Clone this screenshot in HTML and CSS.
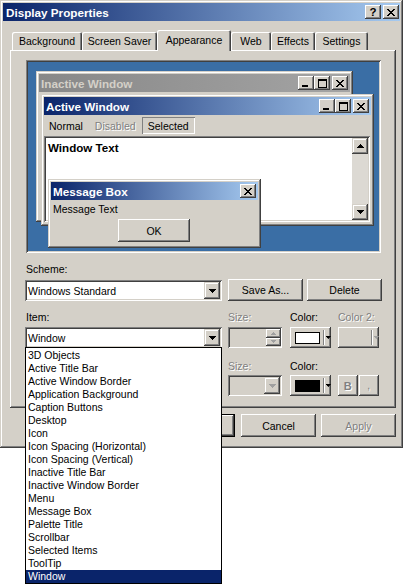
FILE: index.html
```html
<!DOCTYPE html>
<html>
<head>
<meta charset="utf-8">
<link rel="stylesheet" href="styles.css">
</head>
<body>
<div class="dialog">
  <div class="titlebar">
    <span class="title">Display Properties</span>
    <div class="caps">
      <div class="cap help">?</div>
      <div class="cap"><svg width="8" height="7" viewBox="0 0 8 7"><path d="M0 0h2v1h-2z M6 0h2v1h-2z M1 1h2v1h-2z M5 1h2v1h-2z M2 2h4v1h-4z M3 3h2v1h-2z M2 4h4v1h-4z M1 5h2v1h-2z M5 5h2v1h-2z M0 6h2v1h-2z M6 6h2v1h-2z"/></svg></div>
    </div>
  </div>

  <div class="tabs">
    <div class="tab w-bg">Background</div>
    <div class="tab w-ss">Screen Saver</div>
    <div class="tab sel w-ap">Appearance</div>
    <div class="tab w-web">Web</div>
    <div class="tab w-ef">Effects</div>
    <div class="tab w-set">Settings</div>
  </div>

  <div class="panel">
    <div class="preview">
      <div class="win inactive">
        <div class="wtitle">
          <span class="wname">Inactive Window</span>
          <div class="caps">
            <div class="cap min"><span class="minbar"></span></div>
            <div class="cap"><svg width="9" height="9" viewBox="0 0 9 9"><path fill-rule="evenodd" d="M0 0h9v9h-9z M1 2v6h7v-6z"/></svg></div>
            <div class="cap closecap"><svg width="8" height="7" viewBox="0 0 8 7"><path d="M0 0h2v1h-2z M6 0h2v1h-2z M1 1h2v1h-2z M5 1h2v1h-2z M2 2h4v1h-4z M3 3h2v1h-2z M2 4h4v1h-4z M1 5h2v1h-2z M5 5h2v1h-2z M0 6h2v1h-2z M6 6h2v1h-2z"/></svg></div>
          </div>
        </div>
      </div>

      <div class="win active">
        <div class="wtitle grad">
          <span class="wname">Active Window</span>
          <div class="caps">
            <div class="cap min"><span class="minbar"></span></div>
            <div class="cap"><svg width="9" height="9" viewBox="0 0 9 9"><path fill-rule="evenodd" d="M0 0h9v9h-9z M1 2v6h7v-6z"/></svg></div>
            <div class="cap closecap"><svg width="8" height="7" viewBox="0 0 8 7"><path d="M0 0h2v1h-2z M6 0h2v1h-2z M1 1h2v1h-2z M5 1h2v1h-2z M2 2h4v1h-4z M3 3h2v1h-2z M2 4h4v1h-4z M1 5h2v1h-2z M5 5h2v1h-2z M0 6h2v1h-2z M6 6h2v1h-2z"/></svg></div>
          </div>
        </div>
        <div class="menu">
          <span class="mi">Normal</span>
          <span class="mi disabled">Disabled</span>
          <span class="mi msel">Selected</span>
        </div>
        <div class="wtext">
          <div class="wtext-body">Window Text</div>
          <div class="vscroll">
            <div class="sbtn"><svg width="7" height="4" viewBox="0 0 7 4"><path d="M3 0H4V1H5V2H6V3H7V4H0V3H1V2H2V1H3Z"/></svg></div>
            <div class="track"></div>
            <div class="sbtn"><svg width="7" height="4" viewBox="0 0 7 4"><path d="M0 0H7V1H6V2H5V3H4V4H3V3H2V2H1V1H0Z"/></svg></div>
          </div>
        </div>
      </div>

      <div class="win msg">
        <div class="wtitle grad">
          <span class="wname">Message Box</span>
          <div class="caps">
            <div class="cap"><svg width="8" height="7" viewBox="0 0 8 7"><path d="M0 0h2v1h-2z M6 0h2v1h-2z M1 1h2v1h-2z M5 1h2v1h-2z M2 2h4v1h-4z M3 3h2v1h-2z M2 4h4v1h-4z M1 5h2v1h-2z M5 5h2v1h-2z M0 6h2v1h-2z M6 6h2v1h-2z"/></svg></div>
          </div>
        </div>
        <div class="msgtext">Message Text</div>
        <div class="btn msgok">OK</div>
      </div>
    </div>

    <div class="lbl scheme-lbl">Scheme:</div>
    <div class="scheme-row">
      <div class="combo scheme-combo">
        <span class="ctext">Windows Standard</span>
        <div class="dbtn"><svg width="7" height="4" viewBox="0 0 7 4"><path d="M0 0H7V1H6V2H5V3H4V4H3V3H2V2H1V1H0Z"/></svg></div>
      </div>
      <div class="btn sbtn-w">Save As...</div>
      <div class="btn sbtn-w del">Delete</div>
    </div>

    <div class="grid">
      <div class="lbl first">Item:</div>
      <div class="lbl disabled">Size:</div>
      <div class="lbl">Color:</div>
      <div class="lbl disabled">Color 2:</div>

      <div class="combo item-combo">
        <span class="ctext">Window</span>
        <div class="dbtn"><svg width="7" height="4" viewBox="0 0 7 4"><path d="M0 0H7V1H6V2H5V3H4V4H3V3H2V2H1V1H0Z"/></svg></div>
      </div>
      <div class="spin">
        <div class="spinbtns">
          <div class="spb"><svg width="5" height="3" viewBox="0 0 5 3"><path d="M2 0H3V1H4V2H5V3H0V2H1V1H2Z"/></svg></div>
          <div class="spb"><svg width="5" height="3" viewBox="0 0 5 3"><path d="M0 0H5V1H4V2H3V3H2V2H1V1H0Z"/></svg></div>
        </div>
      </div>
      <div class="btn colorbtn">
        <span class="swatch white"></span><span class="sep"></span>
        <svg class="carr" width="5" height="3" viewBox="0 0 5 3"><path d="M0 0H5V1H4V2H3V3H2V2H1V1H0Z"/></svg>
      </div>
      <div class="btn colorbtn off">
        <span class="swatch none"></span><span class="sep"></span>
        <svg class="carr" width="5" height="3" viewBox="0 0 5 3"><path d="M0 0H5V1H4V2H3V3H2V2H1V1H0Z"/></svg>
      </div>

      <div class="lbl first"></div>
      <div class="lbl disabled">Size:</div>
      <div class="lbl">Color:</div>
      <div class="lbl"></div>

      <div class="combo item-combo off">
        <span class="ctext"></span>
        <div class="dbtn"><svg width="7" height="4" viewBox="0 0 7 4"><path d="M0 0H7V1H6V2H5V3H4V4H3V3H2V2H1V1H0Z"/></svg></div>
      </div>
      <div class="combo size-combo off">
        <span class="ctext"></span>
        <div class="dbtn"><svg width="7" height="4" viewBox="0 0 7 4"><path d="M0 0H7V1H6V2H5V3H4V4H3V3H2V2H1V1H0Z"/></svg></div>
      </div>
      <div class="btn colorbtn">
        <span class="swatch black"></span><span class="sep"></span>
        <svg class="carr" width="5" height="3" viewBox="0 0 5 3"><path d="M0 0H5V1H4V2H3V3H2V2H1V1H0Z"/></svg>
      </div>
      <div class="bi">
        <div class="btn bbtn disabled">B</div>
        <div class="btn ibtn disabled">,</div>
      </div>
    </div>
  </div>

  <div class="footer">
    <div class="btn fbtn ok">OK</div>
    <div class="btn fbtn">Cancel</div>
    <div class="btn fbtn disabled">Apply</div>
  </div>
</div>

<div class="listbox">
  <div class="li">3D Objects</div>
  <div class="li">Active Title Bar</div>
  <div class="li">Active Window Border</div>
  <div class="li">Application Background</div>
  <div class="li">Caption Buttons</div>
  <div class="li">Desktop</div>
  <div class="li">Icon</div>
  <div class="li">Icon Spacing (Horizontal)</div>
  <div class="li">Icon Spacing (Vertical)</div>
  <div class="li">Inactive Title Bar</div>
  <div class="li">Inactive Window Border</div>
  <div class="li">Menu</div>
  <div class="li">Message Box</div>
  <div class="li">Palette Title</div>
  <div class="li">Scrollbar</div>
  <div class="li">Selected Items</div>
  <div class="li">ToolTip</div>
  <div class="li hl">Window</div>
</div>
</body>
</html>
```

FILE: styles.css
```css
* { box-sizing: border-box; }

body {
  margin: 0;
  width: 406px;
  height: 585px;
  overflow: hidden;
  position: relative;
  background: #ffffff;
  font-family: "Liberation Sans", Arial, sans-serif;
  font-size: 10.5px;
  color: #000;
}

svg { display: block; fill: #000; }

.dialog {
  width: 403px;
  height: 448px;
  padding: 3px;
  background: #D4D0C8;
  display: flex;
  flex-direction: column;
  box-shadow: inset -1px -1px #404040, inset 1px 1px #D4D0C8, inset -2px -2px #808080, inset 2px 2px #ffffff;
}

.titlebar {
  height: 18px;
  flex: none;
  display: flex;
  align-items: center;
  padding: 0 1px 0 3px;
  background: linear-gradient(to right, #0A246A, #A6CAF0);
  color: #fff;
  font-weight: bold;
  font-size: 11.7px;
}
.titlebar .title { flex: 1; }

.caps { display: flex; gap: 2px; }
.cap {
  width: 16px;
  height: 14px;
  background: #D4D0C8;
  display: flex;
  align-items: center;
  justify-content: center;
  box-shadow: inset -1px -1px #404040, inset 1px 1px #ffffff, inset -2px -2px #808080, inset 2px 2px #D4D0C8;
  color: #000;
}
.cap.help { font-size: 11.5px; font-weight: bold; line-height: 14px; }
.cap.min { align-items: flex-end; justify-content: flex-start; padding: 0 0 3px 4px; }
.minbar { width: 6px; height: 2px; background: #000; display: block; }
.wtitle .caps { gap: 0; }
.wtitle .caps .closecap { margin-left: 2px; }

/* tabs */
.tabs {
  display: flex;
  align-items: flex-end;
  height: 21px;
  margin-top: 9px;
  margin-bottom: -1px;
  padding-left: 9px;
  position: relative;
  z-index: 1;
  flex: none;
}
.tab {
  height: 18px;
  margin-bottom: 1px;
  display: flex;
  align-items: center;
  justify-content: center;
  background: #D4D0C8;
  border-radius: 2px 2px 0 0;
  box-shadow: inset 1px 1px #ffffff, inset -1px 0 #404040, inset -2px 0 #808080;
}
.tab.sel { height: 21px; margin-bottom: 0; padding-bottom: 2px; }
.w-bg { width: 70px; }
.w-ss { width: 75px; }
.w-ap { width: 74px; }
.w-web { width: 40px; }
.w-ef { width: 44px; }
.w-set { width: 53px; }

/* panel */
.panel {
  margin-left: 7px;
  width: 386px;
  height: 358px;
  flex: none;
  padding: 10px 0 0 15px;
  display: flex;
  flex-direction: column;
  box-shadow: inset -1px -1px #404040, inset 1px 1px #ffffff, inset -2px -2px #808080;
}

.preview {
  position: relative;
  margin-left: 1px;
  width: 355px;
  height: 193px;
  flex: none;
  background: #3A6EA5;
  box-shadow: inset 1px 1px #808080, inset -1px -1px #ffffff, inset 2px 2px #404040, inset -2px -2px #D4D0C8;
}

.win {
  position: absolute;
  background: #D4D0C8;
  padding: 3px;
  display: flex;
  flex-direction: column;
  box-shadow: inset -1px -1px #404040, inset 1px 1px #D4D0C8, inset -2px -2px #808080, inset 2px 2px #ffffff;
}
.inactive { left: 10px; top: 11px; width: 317px; height: 151px; }
.active { left: 15px; top: 34px; width: 333px; height: 132px; }
.msg { left: 22px; top: 119px; width: 213px; height: 69px; }

.wtitle {
  height: 18px;
  flex: none;
  display: flex;
  align-items: center;
  padding: 0 2px 0 2px;
  font-weight: bold;
  font-size: 11.7px;
}
.wtitle .wname { flex: 1; }
.inactive .wtitle { background: linear-gradient(to right, #888888, #A4A4A4); color: #D4D0C8; }
.wtitle.grad { background: linear-gradient(to right, #0A246A, #A6CAF0); color: #fff; }

.menu {
  height: 17px;
  margin-top: 2px;
  margin-left: -1px;
  display: flex;
  flex: none;
}
.mi { padding: 0 6px; display: flex; align-items: center; }
.mi.msel { box-shadow: inset 1px 1px #808080, inset -1px -1px #ffffff; }
.disabled { color: #808080; text-shadow: 1px 1px #ffffff; }

.wtext {
  margin-top: 2px;
  height: 86px;
  flex: none;
  margin-right: 1px;
  padding: 2px;
  background: #fff;
  display: flex;
  box-shadow: inset 1px 1px #808080, inset -1px -1px #ffffff, inset 2px 2px #404040, inset -2px -2px #D4D0C8;
}
.wtext-body { flex: 1; font-weight: bold; font-size: 11.6px; padding: 3px 0 0 2px; }
.vscroll { width: 16px; display: flex; flex-direction: column; }
.sbtn {
  width: 16px;
  height: 16px;
  flex: none;
  display: flex;
  align-items: center;
  justify-content: center;
  background: #D4D0C8;
  box-shadow: inset -1px -1px #404040, inset 1px 1px #D4D0C8, inset -2px -2px #808080, inset 2px 2px #ffffff;
}
.track { flex: 1; background: #DCD9D3; }

.msgtext { margin-top: 3px; padding-left: 2px; height: 13px; line-height: 13px; }
.msgok { margin: 3px 0 0 67px; width: 72px; height: 23px; }

/* buttons */
.btn {
  background: #D4D0C8;
  display: flex;
  align-items: center;
  justify-content: center;
  box-shadow: inset -1px -1px #404040, inset 1px 1px #ffffff, inset -2px -2px #808080, inset 2px 2px #D4D0C8;
}

.lbl { height: 13px; line-height: 13px; }
.lbl.first { padding-left: 1px; }
.scheme-lbl { margin-top: 10px; padding-left: 1px; }

.scheme-row {
  margin-top: 3px;
  display: flex;
  align-items: flex-end;
  height: 22px;
}
.sbtn-w { width: 75px; height: 22px; margin-left: 6px; }
.sbtn-w.del { margin-left: 4px; }

.combo {
  height: 21px;
  background: #fff;
  padding: 2px;
  display: flex;
  align-items: stretch;
  box-shadow: inset 1px 1px #808080, inset -1px -1px #ffffff, inset 2px 2px #404040, inset -2px -2px #D4D0C8;
}
.combo.off { background: #D4D0C8; }
.ctext { flex: 1; padding-left: 1px; display: flex; align-items: center; }
.dbtn {
  width: 16px;
  display: flex;
  align-items: center;
  justify-content: center;
  background: #D4D0C8;
  box-shadow: inset -1px -1px #404040, inset 1px 1px #D4D0C8, inset -2px -2px #808080, inset 2px 2px #ffffff;
}
.off .dbtn svg { fill: #A0A0A0; }
.scheme-combo { width: 197px; }
.item-combo { width: 197px; }
.size-combo { width: 54px; }

.grid {
  margin-top: 10px;
  display: grid;
  grid-template-columns: 203px 62px 48px 41px;
  grid-template-rows: 13px 21px 22px 21px;
  row-gap: 3px;
}
.grid > :nth-child(n+9):nth-child(-n+12) { margin-top: 9px; }
.grid > :nth-child(n+13) { margin-top: -1px; }

.spin {
  width: 54px;
  height: 21px;
  padding: 2px 1px 2px 2px;
  display: flex;
  justify-content: flex-end;
  background: #D4D0C8;
  box-shadow: inset 1px 1px #808080, inset -1px -1px #ffffff, inset 2px 2px #404040, inset -2px -2px #D4D0C8;
}
.spinbtns { width: 15px; display: flex; flex-direction: column; }
.spb {
  flex: 1;
  display: flex;
  align-items: center;
  justify-content: center;
  background: #D4D0C8;
  box-shadow: inset -1px -1px #404040, inset 1px 1px #ffffff, inset -2px -2px #808080;
}
.spb svg { fill: #A0A0A0; }

.colorbtn {
  width: 41px;
  height: 21px;
  justify-content: flex-start;
  padding-left: 5px;
}
.swatch { width: 27px; height: 12px; display: block; }
.swatch.white { background: #fff; border: 1px solid #000; }
.swatch.black { background: #000; }
.swatch.none { background: transparent; }
.sep { width: 2px; height: 15px; margin-left: 3px; border-left: 1px solid #808080; border-right: 1px solid #ffffff; display: block; }
.carr { margin-left: 1px; }
.colorbtn.off .carr { fill: #A0A0A0; }

.bi { display: flex; gap: 1px; }
.bbtn { width: 20px; height: 21px; font-weight: bold; font-size: 11px; }
.ibtn { width: 21px; height: 21px; font-size: 10px; }

.footer {
  margin-top: 6px;
  display: flex;
  justify-content: flex-end;
  gap: 5px;
  padding-right: 4px;
}
.fbtn { width: 75px; height: 23px; }
.fbtn.ok { margin-right: 1px; box-shadow: inset 0 0 0 1px #000, inset -2px -2px #404040, inset 2px 2px #ffffff, inset -3px -3px #808080; }

.listbox {
  position: absolute;
  left: 25px;
  top: 347px;
  width: 197px;
  border: 1px solid #000;
  background: #fff;
  padding-top: 1px;
}
.li { height: 13px; line-height: 13px; padding-left: 2px; white-space: nowrap; }
.li.hl { background: #0A246A; color: #fff; }
```
